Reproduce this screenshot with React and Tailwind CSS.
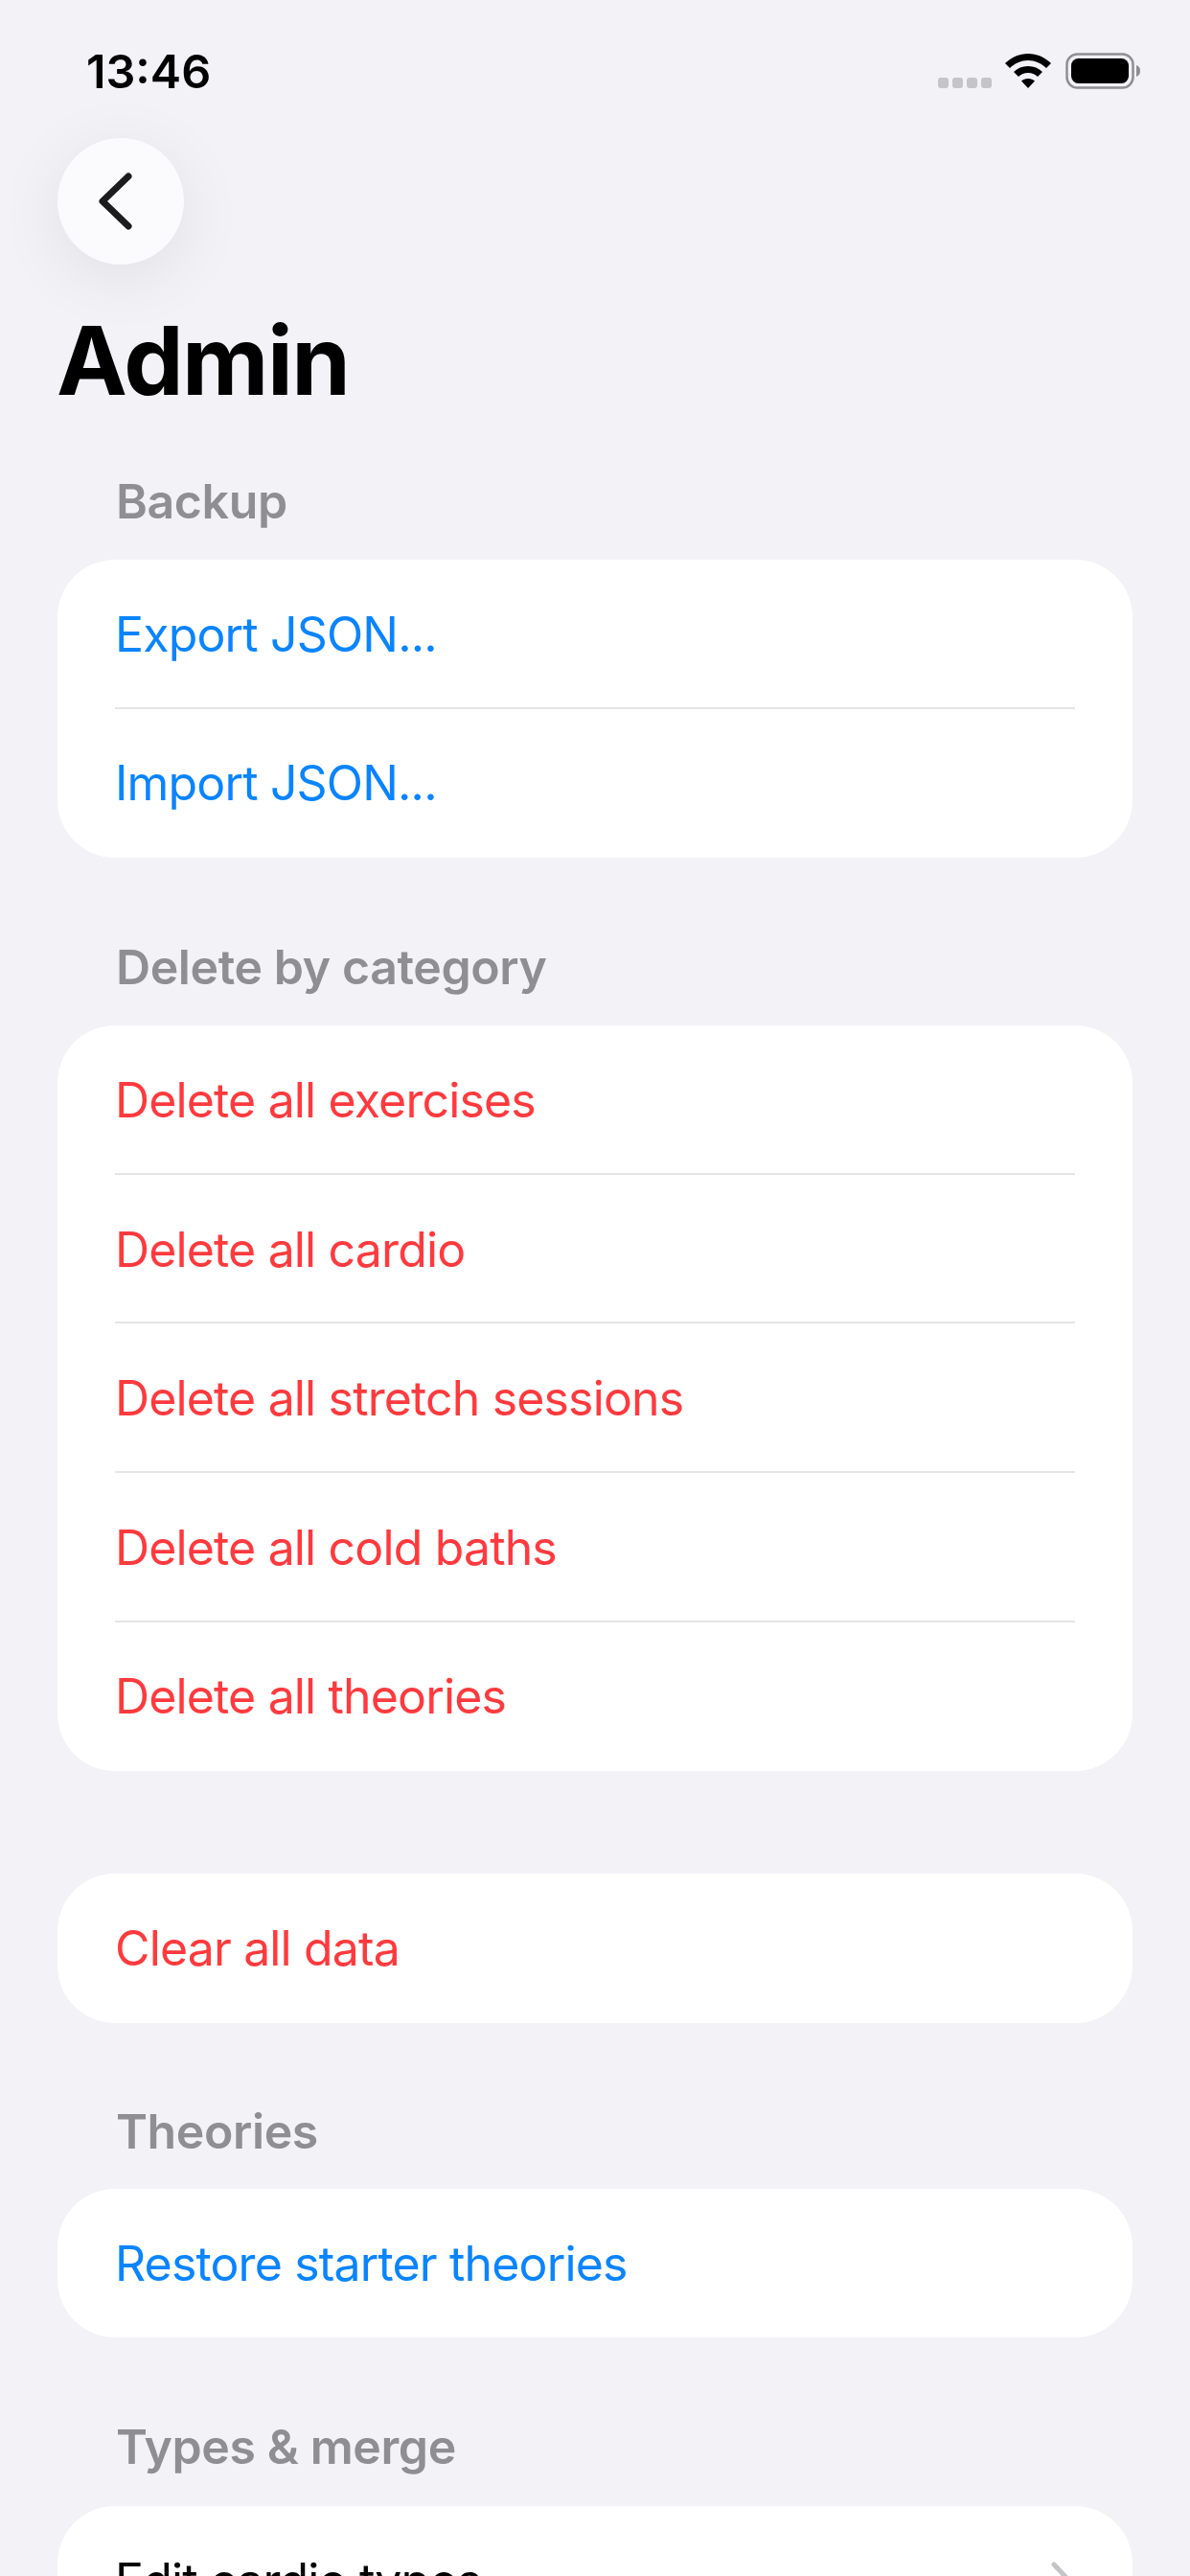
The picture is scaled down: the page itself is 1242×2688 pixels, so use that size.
const Row = ({ children, color, last, chevron }) => (
  <div className="relative flex h-[155.6px] items-center justify-between">
    <span className={`text-[50px] leading-[62px] tracking-[-0.85px] ${color}`}>{children}</span>
    {chevron && (
      <svg width="24" height="42" viewBox="0 0 24 42" fill="none" className="mr-[2px]">
        <path d="M4 4l16 17L4 38" stroke="#c4c4c7" strokeWidth="5" strokeLinecap="round" strokeLinejoin="round" />
      </svg>
    )}
    {!last && <div className="absolute bottom-0 left-0 right-0 h-[2px] bg-[#e5e5e8]" />}
  </div>
);

const Card = ({ children, className = "" }) => (
  <div className={`rounded-[60px] bg-white px-[60px] ${className}`}>{children}</div>
);

const Header = ({ children, className = "" }) => (
  <div className={`pl-[61px] text-[50px] font-semibold leading-[54px] tracking-[-0.4px] text-[#8e8e93] ${className}`}>{children}</div>
);

const blue = "text-[#0a84ff]";
const red = "text-[#ff3a3e]";

export default function App() {
  return (
    <div
      className="relative h-[2688px] w-[1242px] overflow-hidden bg-[#f2f2f7]"
      style={{ fontFamily: 'Inter, "Liberation Sans", sans-serif' }}
    >
      <div className="flex h-[144px] items-start justify-between pl-[90px] pr-[50px] pt-[46px]">
        <span className="text-[48.5px] font-semibold leading-[58px] text-black">13:46</span>
        <div className="mt-[9px] flex items-center">
          <div className="mt-[25px] flex gap-[4px]">
            <i className="h-[11px] w-[11px] rounded-[3px] bg-[#c5c5c9]" />
            <i className="h-[11px] w-[11px] rounded-[3px] bg-[#c5c5c9]" />
            <i className="h-[11px] w-[11px] rounded-[3px] bg-[#c5c5c9]" />
            <i className="h-[11px] w-[11px] rounded-[3px] bg-[#c5c5c9]" />
          </div>
          <svg width="50" height="38" viewBox="0 0 50 38" className="ml-[13px]">
            <path d="M25 1C16 1 8 4.500 1 11l5 5c5-5 12-8 19-8s14 3 19 8l5-5C42 4.500 34 1 25 1z" fill="#000" />
            <path d="M25 14c-6 0-11 2-15 6l5 5c3-2.500 6-4 10-4s7 1.500 10 4l5-5c-4-4-9-6-15-6z" fill="#000" />
            <path d="M25 27c-3 0-5 1-7 2.500L25 37l7-7.500C30 28 28 27 25 27z" fill="#000" />
          </svg>
          <svg width="80" height="38" viewBox="0 0 80 38" className="ml-[14px]">
            <rect x="1.500" y="1.500" width="69" height="35" rx="11" fill="none" stroke="#8f8f93" strokeWidth="2.500" />
            <rect x="6" y="6" width="60" height="26" rx="7.500" fill="#000" />
            <path d="M74 13c3 1 4 3 4 6s-1 5-4 6z" fill="#8f8f93" />
          </svg>
        </div>
      </div>

      <div className="ml-[60px] flex h-[132px] w-[132px] items-center justify-center rounded-full bg-[#fbfbfe] shadow-[0_14px_70px_rgba(0,0,0,0.08)]">
        <svg width="44" height="62" viewBox="0 0 44 62" fill="none" className="mr-[8px]">
          <path d="M34 5L7 31l27 26" stroke="#1c1c1e" strokeWidth="7" strokeLinecap="round" strokeLinejoin="round" />
        </svg>
      </div>

      <h1 className="ml-[59px] mt-[38px] text-[99px] font-bold leading-[124px] tracking-[-1.5px] text-black">Admin</h1>

      <div className="px-[60px]">
        <Header className="mt-[58px]">Backup</Header>
        <Card className="mt-[34px]">
          <Row color={blue}>Export JSON...</Row>
          <Row color={blue} last>Import JSON...</Row>
        </Card>

        <Header className="mt-[87px]">Delete by category</Header>
        <Card className="mt-[34px]">
          <Row color={red}>Delete all exercises</Row>
          <Row color={red}>Delete all cardio</Row>
          <Row color={red}>Delete all stretch sessions</Row>
          <Row color={red}>Delete all cold baths</Row>
          <Row color={red} last>Delete all theories</Row>
        </Card>

        <Card className="mt-[107px]">
          <Row color={red} last>Clear all data</Row>
        </Card>

        <Header className="mt-[86px]">Theories</Header>
        <Card className="mt-[33px]">
          <Row color={blue} last>Restore starter theories</Row>
        </Card>

        <Header className="mt-[87px]">Types &amp; merge</Header>
        <Card className="mt-[35px]">
          <Row color="text-black" chevron>Edit cardio types</Row>
        </Card>
      </div>
    </div>
  );
}
